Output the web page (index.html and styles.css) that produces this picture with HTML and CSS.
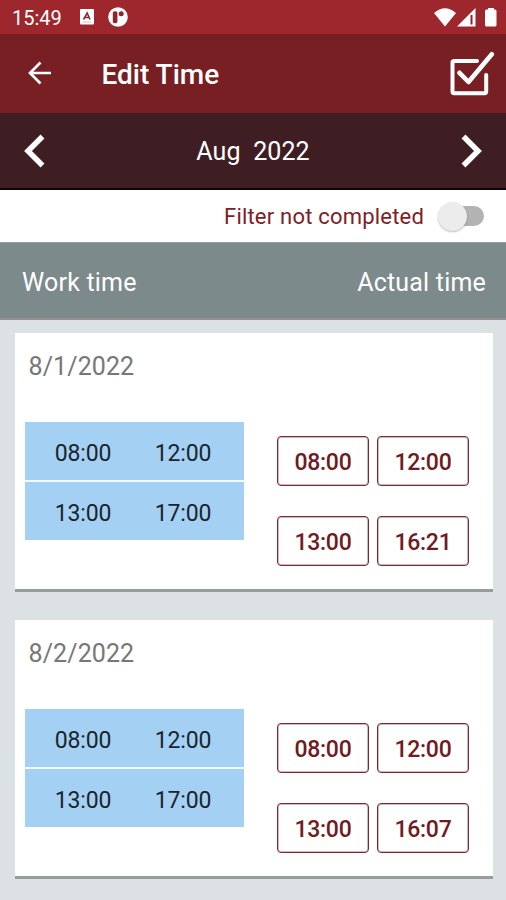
FILE: index.html
```html
<!DOCTYPE html>
<html lang="en">
<head>
<meta charset="utf-8">
<title>Edit Time</title>
<link rel="stylesheet" href="styles.css">
</head>
<body>
<div class="status">
  <span class="clock">15:49</span>
  <svg class="notif" width="14" height="16" viewBox="0 0 14 16"><rect width="14" height="15.5" rx="1" fill="#fff"/><path d="M3.5 10.5 7.2 4 10 10.5M5 8.5h4" fill="none" stroke="#8a2a35" stroke-width="1.6"/><path d="M3 13h8" stroke="#d9a5a9" stroke-width=".8"/></svg>
  <svg class="notif-round" width="20" height="20" viewBox="0 0 20 20"><circle cx="10" cy="10" r="9.8" fill="#fff"/><rect x="4.800" y="4.2" width="4.600" height="12" rx="1.8" fill="#92232a"/><circle cx="13.2" cy="6.7" r="2.5" fill="#92232a"/></svg>
  <svg class="signals" width="64" height="20" viewBox="0 0 64 20"><path d="M0 5Q11-4.500 22 5L11 18.500Z" fill="#fff"/><path d="M23 18.500 41.500 0V18.500Z" fill="#fff"/><path d="M37.500 7v9.500" stroke="#8f2229" stroke-width="2"/><path d="M51 3q0-1.500 1.500-1.500H54V0h6v1.500h1q1.500 0 1.500 1.500v14q0 1.500-1.500 1.500h-8.500q-1.500 0-1.500-1.500Z" fill="#fff"/></svg>
</div>
<header class="appbar">
  <svg class="back" width="26" height="24" viewBox="0 0 26 24"><path d="M24 12H2.500M13.500 1.500 3 12 13.500 22.500" fill="none" stroke="#fff" stroke-width="2.700"/></svg>
  <h1>Edit Time</h1>
  <svg class="check" width="46" height="46" viewBox="0 0 46 46" fill="none" stroke="#fff" stroke-linecap="round" stroke-linejoin="round"><path d="M28 10H5.200Q3.500 10 3.500 11.700V40.500Q3.500 42.200 5.200 42.200H35.500Q37.200 42.200 37.200 40.500V24" stroke-width="4"/><path d="M10.500 21.800 19.500 31 42.800 3.200" stroke-width="4.600"/></svg>
</header>
<nav class="month">
  <svg width="22" height="34" viewBox="0 0 22 34"><path d="M19.500 2.500 5 17 19.500 31.500" fill="none" stroke="#fff" stroke-width="5.500"/></svg>
  <span class="month-name">Aug&nbsp; 2022</span>
  <svg width="22" height="34" viewBox="0 0 22 34"><path d="M2.500 2.500 17 17 2.500 31.500" fill="none" stroke="#fff" stroke-width="5.500"/></svg>
</nav>
<div class="filter">
  <span class="filter-label">Filter not completed</span>
  <span class="switch"><span class="knob"></span></span>
</div>
<div class="columns"><span class="col-work">Work time</span><span class="col-actual">Actual time</span></div>
<main>
  <section class="card">
    <div class="date">8/1/2022</div>
    <div class="times">
      <div class="work"><span>08:00</span><span>12:00</span><span>13:00</span><span>17:00</span></div>
      <div class="actual"><span>08:00</span><span>12:00</span><span>13:00</span><span>16:21</span></div>
    </div>
  </section>
  <section class="card">
    <div class="date">8/2/2022</div>
    <div class="times">
      <div class="work"><span>08:00</span><span>12:00</span><span>13:00</span><span>17:00</span></div>
      <div class="actual"><span>08:00</span><span>12:00</span><span>13:00</span><span>16:07</span></div>
    </div>
  </section>
</main>
</body>
</html>
```
FILE: styles.css
```css
* { box-sizing: border-box; }
body {
  margin: 0;
  height: 900px;
  overflow: hidden;
  background: #dce1e4;
  font-family: Roboto, sans-serif;
  color: #fff;
}
svg { display: block; flex: none; }
.status {
  height: 34px;
  background: #9e272d;
  display: flex;
  align-items: center;
  padding: 0 9px 0 12px;
}
.clock { width: 68px; font-size: 20px; line-height: 36px; padding-top: 2px; }
.notif-round { margin-left: 14px; }
.signals { margin: 1px -1px 0 auto; }
.appbar {
  height: 79px;
  background: #781f23;
  display: flex;
  align-items: center;
  padding: 0 11px 0 27px;
}
.back { margin-top: -2px; }
h1 { margin: 3px 0 0 48.5px; font-size: 28px; font-weight: 500; line-height: 36px; }
.check { margin: 1px 0 0 auto; }
.month {
  height: 77px;
  background: #3f1e23;
  border-bottom: 2px solid #0c0406;
  display: flex;
  align-items: center;
  justify-content: space-between;
  padding: 0 23px;
}
.month-name { padding-top: 2px; font-size: 25px; letter-spacing: 0.1px; }
.filter {
  height: 52px;
  background: #fff;
  display: flex;
  align-items: center;
  justify-content: flex-end;
  padding-right: 22px;
}
.filter-label { color: #7e2027; font-size: 22px; letter-spacing: 0.2px; }
.switch {
  width: 44px;
  height: 20px;
  margin: 0 0 0 16px;
  border-radius: 10px;
  background: #b3b3b3;
  display: flex;
  align-items: center;
}
.knob {
  flex: none;
  width: 29px;
  height: 29px;
  margin-left: -2px;
  border-radius: 50%;
  background: #ececec;
  box-shadow: 0 1px 2px #0004;
}
.columns {
  height: 78px;
  background: #7c8a8b;
  border-top: 1px solid #929c9d;
  border-bottom: 2px solid #968d8d;
  display: flex;
  align-items: center;
  justify-content: space-between;
  padding: 4px 20px 0 22px;
  font-size: 25px;
  letter-spacing: 0.2px;
}
main { display: flex; flex-direction: column; gap: 28px; padding: 13px 13.5px 0 14.5px; }
.card {
  height: 259px;
  background: #fff;
  border-bottom: 3px solid #999c9d;
  padding: 19px 24px 0 10px;
}
.date { height: 70px; padding-left: 4px; font-size: 25px; line-height: 30px; letter-spacing: 0.1px; color: #777; }
.times { display: flex; justify-content: space-between; }
.work {
  width: 219px;
  height: 118px;
  padding: 0 10px;
  display: grid;
  grid-template-columns: 100px 100px;
  grid-template-rows: 58px 58px;
  row-gap: 2px;
  justify-content: center;
  background: linear-gradient(#a4d1f3 0 58px, #f4faff 58px 60px, #a4d1f3 60px);
}
.work span { display: flex; align-items: center; justify-content: center; padding: 4px 2px 0 0; font-size: 23px; letter-spacing: -0.2px; color: #1b252c; }
.actual {
  margin-top: 14px;
  display: grid;
  grid-template-columns: 92px 92px;
  grid-template-rows: 50px 50px;
  gap: 30px 8px;
}
.actual span {
  display: flex;
  align-items: center;
  justify-content: center;
  padding: 3px 0 0 1px;
  border: 1.500px solid #792a32;
  box-shadow: inset 0 0 0 1px #792a3255;
  border-radius: 4px;
  color: #701b21;
  font-size: 23px;
  font-weight: 500;
  letter-spacing: -0.3px;
}
```
